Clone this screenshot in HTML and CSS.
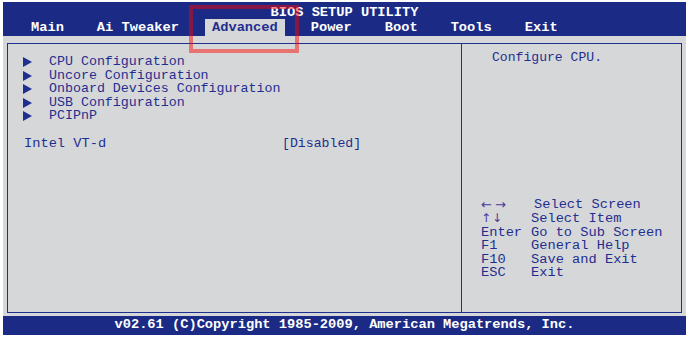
FILE: index.html
```html
<!DOCTYPE html>
<html lang="en">
<head>
  <meta charset="UTF-8" />
  <title>BIOS Setup Utility</title>
  <link rel="stylesheet" href="styles.css">
</head>
<body>
  <div class="screen">
    <div class="header">
      <div class="title">BIOS SETUP UTILITY</div>
      <div class="tabs">
        <span class="tab">Main</span>
        <span class="tab">Ai Tweaker</span>
        <span class="tab active">Advanced</span>
        <span class="tab">Power</span>
        <span class="tab">Boot</span>
        <span class="tab">Tools</span>
        <span class="tab">Exit</span>
      </div>
    </div>
    <div class="main">
      <div class="panel">
        <div class="left">
          <div class="item sub">CPU Configuration</div>
          <div class="item sub">Uncore Configuration</div>
          <div class="item sub">Onboard Devices Configuration</div>
          <div class="item sub">USB Configuration</div>
          <div class="item sub">PCIPnP</div>
          <div class="item blank"></div>
          <div class="item option"><span class="opt-name">Intel VT-d</span><span class="opt-value">[Disabled]</span></div>
        </div>
        <div class="right">
          <div class="help">Configure CPU.</div>
          <div class="keys">
            <span class="key arrows wide">&larr;&rarr;</span><span class="desc first">Select Screen</span>
            <span class="key arrows">&uarr;&darr;</span><span class="desc">Select Item</span>
            <span class="key">Enter</span><span class="desc">Go to Sub Screen</span>
            <span class="key">F1</span><span class="desc">General Help</span>
            <span class="key">F10</span><span class="desc">Save and Exit</span>
            <span class="key">ESC</span><span class="desc">Exit</span>
          </div>
        </div>
      </div>
    </div>
    <div class="footer">v02.61 (C)Copyright 1985-2009, American Megatrends, Inc.</div>
  </div>
  <div class="highlight-box"></div>
</body>
</html>
```

FILE: styles.css
```css
body {
  margin: 0;
  background: #ffffff;
  font-family: "Liberation Mono", "DejaVu Sans Mono", monospace;
  font-size: 13.7px;
}
.screen {
  margin: 2px 3px 4px 3px;
  width: 683px;
}
.header {
  background: #1a2a85;
  color: #ffffff;
  height: 34px;
  display: flex;
  flex-direction: column;
  font-weight: bold;
}
.title {
  padding-top: 4px;
  line-height: 13px;
  text-align: center;
}
.tabs {
  display: flex;
  gap: 19px;
  padding-left: 21px;
  margin-top: auto;
}
.tab {
  padding: 0 7px;
  height: 17px;
  line-height: 18px;
}
.tab.active {
  background: #d6d7d9;
  color: #1f2f8f;
}
.main {
  background: #d6d7d9;
  padding: 7px 4px 3px 4px;
}
.panel {
  border: 1px solid #1f2f8f;
  height: 268px;
  display: grid;
  grid-template-columns: 454px 1fr;
  color: #1f2f8f;
}
.left {
  border-right: 1px solid #1f2f8f;
  padding: 11px 0 0 15px;
}
.item {
  height: 13.6px;
  line-height: 13.6px;
  white-space: pre;
}
.sub {
  display: flex;
  align-items: center;
  padding-left: 26px;
  position: relative;
  font-size: 13.3px;
}
.sub::before {
  content: "";
  position: absolute;
  left: 0;
  top: 2px;
  border-left: 9px solid #1f2f8f;
  border-top: 5px solid transparent;
  border-bottom: 5px solid transparent;
}
.option {
  display: flex;
  padding-left: 1px;
}
.opt-name {
  width: 258px;
}
.opt-value {
  font-size: 13.2px;
}
.right {
  display: flex;
  flex-direction: column;
  padding: 7px 0 32px 0;
}
.help {
  padding-left: 30px;
  line-height: 13.6px;
  font-size: 13.1px;
}
.keys {
  margin-top: auto;
  padding-left: 19px;
  display: grid;
  grid-template-columns: 50px 1fr;
  line-height: 13.6px;
}
.key.arrows {
  font-family: "DejaVu Sans", sans-serif;
  font-size: 12px;
  height: 13.6px;
  color: #4a3a9a;
  letter-spacing: 1px;
}
.key.arrows.wide {
  font-size: 13px;
  letter-spacing: 3px;
}
.desc.first {
  padding-left: 3px;
}
.footer {
  background: #1a2a85;
  color: #ffffff;
  font-weight: bold;
  text-align: center;
  height: 19px;
  line-height: 17px;
}
.highlight-box {
  position: absolute;
  left: 189px;
  top: 5px;
  width: 102px;
  height: 40px;
  border: 4px solid rgba(255, 0, 0, 0.47);
}
```
